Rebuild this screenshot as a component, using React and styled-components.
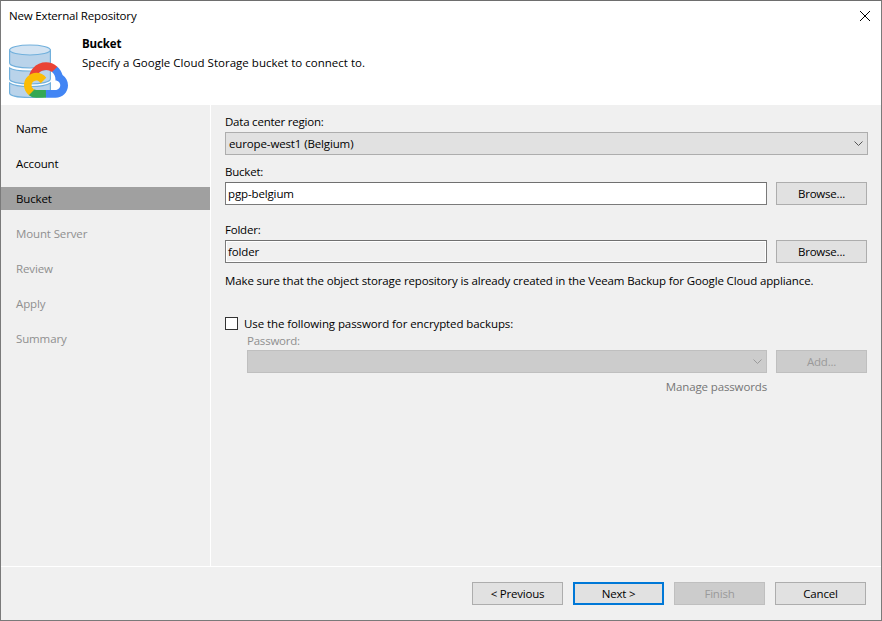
import React from "react";
import styled, { createGlobalStyle } from "styled-components";

const Global = createGlobalStyle`
  html, body { margin: 0; padding: 0; background: #f0f0f0; }
  * { box-sizing: border-box; }
  body { font-family: "Open Sans", "Noto Sans", "Liberation Sans", sans-serif; font-size: 11.5px; letter-spacing: -0.13px; color: #000; }
`;

const Window = styled.div`
  width: 882px; height: 621px; display: flex; flex-direction: column;
  border: 1px solid #7a7a7a; border-top-color: #6e6e6e; background: #f0f0f0; overflow: hidden;
`;
const Header = styled.header`
  height: 104px; flex: none; background: #fff; display: flex; flex-direction: column;
`;
const TitleBar = styled.div`
  height: 30px; flex: none; display: flex; align-items: center; justify-content: space-between;
  padding: 0 11px 0 8px;
`;
const TitleText = styled.span` letter-spacing: -0.17px; margin-bottom: 2px; `;
const HeaderBody = styled.div` display: flex; `;
const HeaderIcon = styled.svg` width: 62px; height: 56px; margin: 12px 0 0 8px; flex: none; `;
const HeaderText = styled.div` margin-left: 11px; padding-top: 5px; `;
const HeaderTitle = styled.div` font-weight: 700; line-height: 16px; `;
const HeaderSub = styled.div` line-height: 16px; margin-top: 3px; letter-spacing: 0.02px; `;

const Middle = styled.div` flex: 1; display: flex; min-height: 0; `;
const Sidebar = styled.nav`
  width: 210px; flex: none; border-right: 1px solid #fff; padding-top: 12px;
`;
const NavItem = styled.div`
  height: 23px; margin-bottom: 12px; width: 209px; padding: 1px 0 0 15px; line-height: 22px;
  color: ${p => (p.$disabled ? "#8f8f8f" : "#000")};
  background: ${p => (p.$active ? "#a0a0a0" : "transparent")};
`;
const Content = styled.main` flex: 1; padding: 9px 13px 0 14px; `;
const Label = styled.div`
  line-height: 16px; height: 16px; letter-spacing: -0.22px; color: ${p => (p.$disabled ? "#8f8f8f" : "#000")};
`;
const Select = styled.div`
  height: 23px; display: flex; align-items: center; justify-content: space-between; padding: 0 4px 0 3px;
  width: ${p => p.$w}px; margin-top: ${p => p.$mt || 0}px;
  background: ${p => (p.$disabled ? "#cccccc" : "#e1e1e1")};
  border: 1px solid ${p => (p.$disabled ? "#bfbfbf" : "#adadad")};
`;
const Chevron = styled.svg` width: 9px; height: 5px; flex: none; `;
const Row = styled.div` display: flex; align-items: center; gap: 9px; margin-top: ${p => p.$mt || 0}px; `;
const Input = styled.div`
  width: 542px; height: 23px; display: flex; align-items: center; padding: 0 2px;
  border: 1px solid #7a7a7a; border-top-color: #707070;
  background: ${p => (p.$plain ? "#f0f0f0" : "#fff")};
  box-shadow: ${p => (p.$plain ? "inset 0 0 0 1px #fff" : "none")};
`;
const Button = styled.button`
  width: 91px; height: 23px; padding: 0; font: inherit; letter-spacing: -0.2px;
  background: ${p => (p.$disabled ? "#cccccc" : "#e1e1e1")};
  color: ${p => (p.$disabled ? "#9a9a9a" : "#000")};
  border: ${p => (p.$primary ? "2px solid #0078d7" : `1px solid ${p.$disabled ? "#bfbfbf" : "#adadad"}`)};
`;
const Field = styled.div` margin-top: ${p => p.$mt || 0}px; `;
const Note = styled.p` margin: 10px 0 0; line-height: 16px; `;
const CheckRow = styled.label` display: flex; align-items: center; gap: 6px; margin-top: 26px; height: 16px; letter-spacing: -0.09px; `;
const Check = styled.span` width: 13px; height: 13px; border: 1px solid #333; background: #fff; flex: none; `;
const Indented = styled.div` margin-left: 22px; margin-top: 2px; `;
const Manage = styled.div`
  width: 520px; text-align: right; color: #767676; line-height: 16px; margin-top: 6px;
`;
const Footer = styled.footer`
  height: 54px; flex: none; border-top: 1px solid #fff; display: flex; justify-content: flex-end; gap: 10px;
  padding: 15px 15px 0 0;
`;

const DownArrow = ({ color }) => (
  <Chevron viewBox="0 0 9 5"><path d="M0.5 0.5 L4.5 4.5 L8.5 0.5" fill="none" stroke={color} strokeWidth="1" /></Chevron>
);

const BucketIcon = () => (
  <HeaderIcon viewBox="0 0 62 56">
    <g fill="#b9d3ea" stroke="#71b0dc" strokeWidth="1.2">
      <path d="M0.6 7 V20 C0.6 23 10 25 21 25 C32 25 41.4 23 41.4 20 V7 Z" />
      <path d="M0.6 25 V36 C0.6 39 10 41 21 41 C32 41 41.4 39 41.4 36 V25 C38 27.5 32 28 21 28 C10 28 4 27.5 0.6 25 Z" />
      <path d="M0.6 40 V50 C0.6 53 10 54.5 21 54.5 C32 54.5 41.4 53 41.4 50 V40 C38 42.5 32 43.5 21 43.5 C10 43.5 4 42.5 0.6 40 Z" />
      <ellipse cx="21" cy="7" rx="20.4" ry="5" fill="#d3e3f2" />
    </g>
    <svg x="15" y="19" width="44" height="36" viewBox="0 0 256 206">
      <path fill="#EA4335" d="M170.25 56.82l22.25-22.25 1.48-9.37C153.4-11.7 88.8-7.5 52.1 34 42 45.5 34.4 59.9 30.4 74.8l7.97-1.12 44.5-7.34 3.44-3.51c19.8-21.74 53.27-24.67 76.13-6.17z" />
      <path fill="#4285F4" d="M224.2 73.92c-5.11-18.83-15.61-35.77-30.21-48.72l-31.23 31.23c13.19 10.78 20.7 27.01 20.38 44.03v5.54c15.35 0 27.79 12.44 27.79 27.79 0 15.35-12.44 27.48-27.79 27.48h-55.66l-5.46 5.93v33.34l5.46 5.23h55.66c39.92.31 72.54-31.49 72.85-71.41.19-24.2-11.74-46.89-31.79-60.44z" />
      <path fill="#34A853" d="M71.87 205.8h55.58v-44.5H71.87c-3.96 0-7.8-.85-11.4-2.5l-7.88 2.42-22.4 22.25-1.95 7.57c12.56 9.49 27.9 14.83 43.63 14.76z" />
      <path fill="#FBBC05" d="M71.87 61.43C31.94 61.66-.22 94.22.01 134.15c.13 22.29 10.55 43.29 28.22 56.88l32.24-32.24c-13.99-6.32-20.2-22.78-13.88-36.77 6.32-13.99 22.78-20.2 36.77-13.89 6.16 2.79 11.1 7.72 13.88 13.89l32.24-32.24c-13.72-17.93-35.05-28.42-57.61-28.35z" />
    </svg>
  </HeaderIcon>
);

export default function App() {
  const nav = [["Name"], ["Account"], ["Bucket", "a"], ["Mount Server", "d"], ["Review", "d"], ["Apply", "d"], ["Summary", "d"]];
  return (
    <>
      <Global />
      <Window>
        <Header>
          <TitleBar>
            <TitleText>New External Repository</TitleText>
            <svg width="10" height="10" viewBox="0 0 10 10"><path d="M0 0 L10 10 M10 0 L0 10" stroke="#000" strokeWidth="1" /></svg>
          </TitleBar>
          <HeaderBody>
            <BucketIcon />
            <HeaderText>
              <HeaderTitle>Bucket</HeaderTitle>
              <HeaderSub>Specify a Google Cloud Storage bucket to connect to.</HeaderSub>
            </HeaderText>
          </HeaderBody>
        </Header>
        <Middle>
          <Sidebar>
            {nav.map(([n, s]) => (
              <NavItem key={n} $active={s === "a"} $disabled={s === "d"}>{n}</NavItem>
            ))}
          </Sidebar>
          <Content>
            <Label>Data center region:</Label>
            <Select $mt={2}>europe-west1 (Belgium)<DownArrow color="#555" /></Select>
            <Field $mt={9}>
              <Label>Bucket:</Label>
              <Row $mt={2}><Input>pgp-belgium</Input><Button>Browse...</Button></Row>
            </Field>
            <Field $mt={17}>
              <Label>Folder:</Label>
              <Row $mt={2}><Input $plain>folder</Input><Button>Browse...</Button></Row>
            </Field>
            <Note>Make sure that the object storage repository is already created in the Veeam Backup for Google Cloud appliance.</Note>
            <CheckRow><Check />Use the following password for encrypted backups:</CheckRow>
            <Indented>
              <Label $disabled>Password:</Label>
              <Row $mt={1}>
                <Select $disabled $w={520}><span /><DownArrow color="#9a9a9a" /></Select>
                <Button $disabled>Add...</Button>
              </Row>
              <Manage>Manage passwords</Manage>
            </Indented>
          </Content>
        </Middle>
        <Footer>
          <Button>&lt; Previous</Button>
          <Button $primary>Next &gt;</Button>
          <Button $disabled>Finish</Button>
          <Button>Cancel</Button>
        </Footer>
      </Window>
    </>
  );
}
